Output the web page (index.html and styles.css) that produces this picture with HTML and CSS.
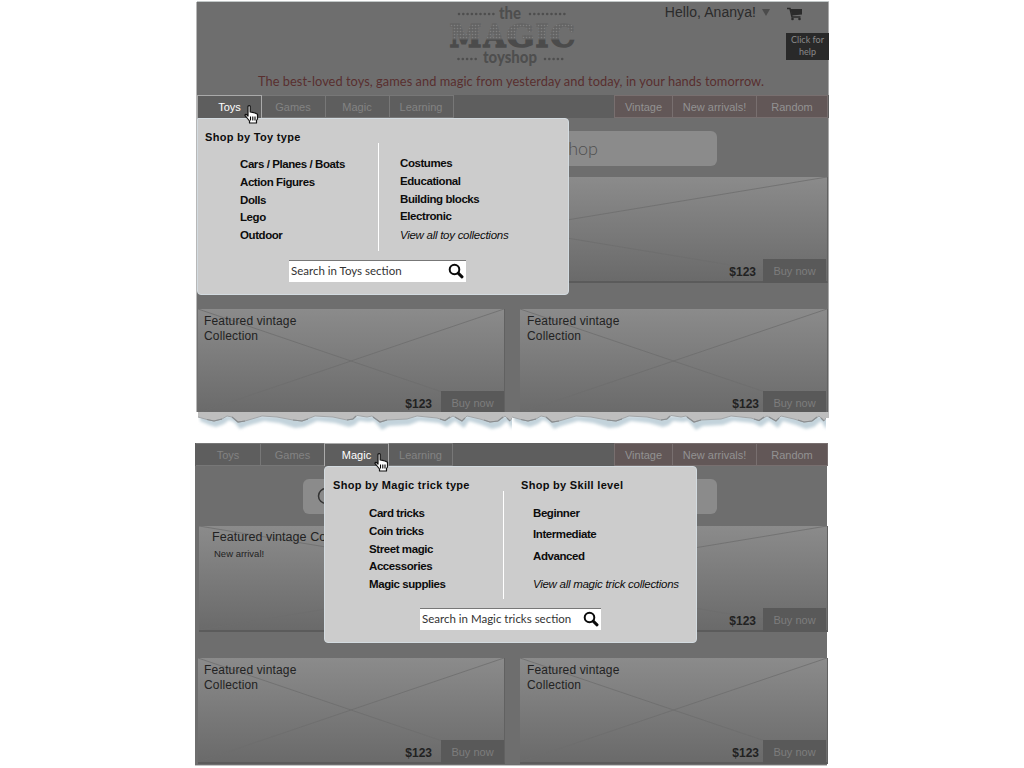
FILE: index.html
```html
<!DOCTYPE html>
<html lang="en">
<head>
<meta charset="utf-8">
<title>The Magic Toyshop</title>
<link rel="stylesheet" href="styles.css">
</head>
<body>
<svg class="defs" width="0" height="0">
  <defs>
    <symbol id="hand" viewBox="0 0 15 19">
      <path d="M4 1.200Q5.200 .2 6.200 1.200V7L8.500 7.300 11 8 13.500 9.200V14L12.500 15.500V18H5.500V16L3.500 13.500 1 10.500Q1 9 2.500 9.500L4 11z" fill="#fff" stroke="#111" stroke-width="1.200" stroke-linejoin="round"/>
      <path d="M6.500 11.500v4M8.800 11.500v4M11 11.500v4" stroke="#000" stroke-width="1.100"/>
    </symbol>
    <symbol id="lens" viewBox="0 0 16 16">
      <circle cx="6.500" cy="6.500" r="4.800" fill="none" stroke="#0a0a0a" stroke-width="2"/>
      <path d="M10.200 10.200L14 13.800" stroke="#0a0a0a" stroke-width="3" stroke-linecap="round"/>
    </symbol>
    <symbol id="tear" viewBox="0 0 314 20">
      <path d="M0 1V6L9 10 16 12 24 9 29 5 34 7 40 14 47 11 64 6 79 8 95 13 104 12 117 6 135 8 149 12 155 10 159 6 169 7 174 6 182 15 189 11 209 10 219 6 239 8 247 12 255 6 264 13 269 6 282 10 292 14 300 12 307 6 312 14 314 8V1z" fill="#c3d3db" filter="url(#soft)" transform="translate(2 3)"/>
      <path d="M0 0V5L9 7.500 16 9 24 7 29 4 34 5 40 10 47 9 64 4 79 5 95 8 104 9 117 4 135 5 149 8 155 7 159 3.500 169 5 174 4 182 10 189 8 209 7 219 4 239 6 247 8.500 255 4 264 9 269 4 282 7 292 10 300 9 307 4 312 9 314 6V0z" fill="#bebebe"/>
      <path d="M0 5L9 7.500 16 9 24 7 29 4 34 5 40 10 47 9 64 4 79 5 95 8 104 9 117 4 135 5 149 8 155 7 159 3.500 169 5 174 4 182 10 189 8 209 7 219 4 239 6 247 8.500 255 4 264 9 269 4 282 7 292 10 300 9 307 4 312 9 314 6" fill="none" stroke="#a2a5a7" stroke-width="1"/>
      <path d="M9 7.500L16 9 24 7M34 5L40 10 47 9M95 8L104 9 110 7M149 8L155 7 158 4M175 5L182 10 189 8M242 7L247 8.500 252 5M257 5L264 9 267 6M286 8L292 10 300 9 305 5M309 6L312 9" fill="none" stroke="#8a8d8f" stroke-width="1.200"/>
    </symbol>
    <filter id="soft" x="-5%" y="-50%" width="110%" height="200%"><feGaussianBlur stdDeviation="1.800"/></filter>
    <pattern id="studs" x="0" y="20" width="3" height="30" patternUnits="userSpaceOnUse">
      <rect width="3" height="30" fill="#646464"/>
      <g fill="#808080"><circle cx="1.500" cy="5.500" r=".8"/><circle cx="1.500" cy="8.500" r=".8"/><circle cx="1.500" cy="11.500" r=".8"/><circle cx="1.500" cy="14.500" r=".8"/><circle cx="1.500" cy="17.500" r=".8"/></g>
      <rect y="19.500" width="3" height="10.500" fill="#4b4b4b"/>
    </pattern>
  </defs>
</svg>

<main class="page">
  <section class="shop shop-toys">
    <header class="masthead">
      <svg class="logo" viewBox="446 2 132 68" width="132" height="68">
        <g stroke="#4e4e4e" stroke-width="2.600" stroke-linecap="round" stroke-dasharray="0 4.300">
          <path d="M459 14h35M530 14h35"/><path d="M458.500 59h18M545 59h18"/>
        </g>
        <g class="logo-small">
          <text x="499" y="19" textLength="22" lengthAdjust="spacingAndGlyphs">the</text>
          <text x="483" y="63" textLength="54" lengthAdjust="spacingAndGlyphs">toyshop</text>
        </g>
        <g class="logo-big">
          <text x="449.500" y="46.500" textLength="32" lengthAdjust="spacingAndGlyphs">M</text>
          <text x="483.500" y="46.500" textLength="22" lengthAdjust="spacingAndGlyphs">A</text>
          <text x="506.500" y="46.500" textLength="28" lengthAdjust="spacingAndGlyphs">G</text>
          <text x="535.500" y="46.500" textLength="13" lengthAdjust="spacingAndGlyphs">I</text>
          <text x="550" y="46.500" textLength="25" lengthAdjust="spacingAndGlyphs">C</text>
        </g>
      </svg>
      <div class="account">
        <div class="account-row">
          <span class="hello">Hello, Ananya!</span>
          <svg class="caret" width="8" height="7"><path d="M0 0h8L4 7z" fill="#4b4b4b"/></svg>
          <svg class="cart" width="16" height="14" viewBox="0 0 16 14"><path d="M0 1.500h3l2 8.500h8.500" fill="none" stroke="#2b2b2b" stroke-width="1.500"/><path d="M3.500 2h11.500v5.500l-10 1z" fill="#2b2b2b"/><circle cx="5.500" cy="12" r="1.300" fill="#2b2b2b"/><circle cx="12.500" cy="12" r="1.300" fill="#2b2b2b"/></svg>
        </div>
        <div class="help">Click for<br>help</div>
      </div>
      <p class="tagline">The best-loved toys, games and magic from yesterday and today, in your hands tomorrow.</p>
    </header>
    <nav class="nav">
      <a class="tab active">Toys</a><a class="tab">Games</a><a class="tab">Magic</a><a class="tab">Learning</a>
      <span class="gap"></span>
      <a class="tab hot vintage">Vintage</a><a class="tab hot arrivals">New arrivals!</a><a class="tab hot random">Random</a>
    </nav>
    <div class="content">
      <div class="search"><svg width="20" height="20"><circle cx="9" cy="9" r="7.500" fill="none" stroke="#333" stroke-width="1.500"/></svg><span>Search the Magic Toy Shop</span></div>
      <article class="card hero">
        <svg class="cross" viewBox="0 0 100 100" preserveAspectRatio="none"><path d="M0 0L100 100M100 0L0 100"/></svg>
        <div class="buy"><b>$123</b><span>Buy now</span></div>
      </article>
      <div class="pair">
        <article class="card">
          <svg class="cross" viewBox="0 0 100 100" preserveAspectRatio="none"><path d="M0 0L100 100M100 0L0 100"/></svg>
          <h3>Featured vintage<br>Collection</h3>
          <div class="buy left"><b>$123</b><span>Buy now</span></div>
        </article>
        <article class="card">
          <svg class="cross" viewBox="0 0 100 100" preserveAspectRatio="none"><path d="M0 0L100 100M100 0L0 100"/></svg>
          <h3>Featured vintage<br>Collection</h3>
          <div class="buy right"><b>$123</b><span>Buy now</span></div>
        </article>
      </div>
    </div>
    <div class="menu menu-toys">
      <h2>Shop by Toy type</h2>
      <div class="columns">
        <ul><li>Cars / Planes / Boats</li><li>Action Figures</li><li>Dolls</li><li>Lego</li><li>Outdoor</li></ul>
        <ul><li>Costumes</li><li>Educational</li><li>Building blocks</li><li>Electronic</li><li class="all">View all toy collections</li></ul>
      </div>
      <div class="find"><span>Search in Toys section</span><svg width="16" height="16"><use href="#lens"/></svg></div>
    </div>
    <svg class="pointer" width="15" height="19"><use href="#hand"/></svg>
  </section>

  <div class="torn"><svg width="314" height="20"><use href="#tear" width="314" height="20"/></svg><svg width="317" height="20"><use href="#tear" width="314" height="20"/><rect x="313" width="4" height="6" fill="#bebebe"/></svg></div>

  <section class="shop shop-magic">
    <nav class="nav">
      <a class="tab">Toys</a><a class="tab">Games</a><a class="tab active">Magic</a><a class="tab">Learning</a>
      <span class="gap"></span>
      <a class="tab hot vintage">Vintage</a><a class="tab hot arrivals">New arrivals!</a><a class="tab hot random">Random</a>
    </nav>
    <div class="content">
      <div class="search"><svg width="20" height="20"><circle cx="9" cy="9" r="7.500" fill="none" stroke="#333" stroke-width="1.500"/></svg></div>
      <article class="card hero">
        <svg class="cross" viewBox="0 0 100 100" preserveAspectRatio="none"><path d="M0 0L100 100M100 0L0 100"/></svg>
        <h3>Featured vintage Collection</h3>
        <p class="note">New arrival!</p>
        <div class="buy"><b>$123</b><span>Buy now</span></div>
      </article>
      <div class="pair">
        <article class="card">
          <svg class="cross" viewBox="0 0 100 100" preserveAspectRatio="none"><path d="M0 0L100 100M100 0L0 100"/></svg>
          <h3>Featured vintage<br>Collection</h3>
          <div class="buy left"><b>$123</b><span>Buy now</span></div>
        </article>
        <article class="card">
          <svg class="cross" viewBox="0 0 100 100" preserveAspectRatio="none"><path d="M0 0L100 100M100 0L0 100"/></svg>
          <h3>Featured vintage<br>Collection</h3>
          <div class="buy right"><b>$123</b><span>Buy now</span></div>
        </article>
      </div>
    </div>
    <div class="menu menu-magic">
      <div class="heads"><h2>Shop by Magic trick type</h2><h2>Shop by Skill level</h2></div>
      <div class="columns">
        <ul><li>Card tricks</li><li>Coin tricks</li><li>Street magic</li><li>Accessories</li><li>Magic supplies</li></ul>
        <ul class="levels"><li>Beginner</li><li>Intermediate</li><li>Advanced</li><li class="all">View all magic trick collections</li></ul>
      </div>
      <div class="find"><span>Search in Magic tricks section</span><svg width="16" height="16"><use href="#lens"/></svg></div>
    </div>
    <svg class="pointer" width="15" height="19"><use href="#hand"/></svg>
  </section>
</main>
</body>
</html>
```
FILE: styles.css
```css
* { box-sizing: border-box; }
body { margin: 0; background: #fff; font-family: "Liberation Sans", Arial, sans-serif; color: #222; font-variant-ligatures: none; }
h2, h3, p, ul { margin: 0; padding: 0; list-style: none; }
.defs { display: block; position: absolute; }
.page { padding-top: 2px; height: 768px; overflow: hidden; }
.shop { position: relative; width: 632px; background: #6e6e6e; }
.shop-toys { margin-left: 197px; height: 410px; box-shadow: -1px 0 #b8b8b8, 0 -1px #c2c8c8, inset -1px 0 #aaa; }
.shop-magic { margin-left: 195px; height: 322px; margin-top: 10px; box-shadow: 0 1px #c4c4c4, inset 0 1px #777; }

/* Masthead */
.masthead { height: 93px; display: grid; grid-template: 68px 25px / 249px 132px 1fr; }
.logo { grid-column: 2; }
.logo-small { font: 900 17px Lato, sans-serif; fill: #4e4e4e; }
.logo-big { font: bold 32px "DejaVu Serif", serif; fill: url(#studs); stroke: url(#studs); stroke-width: 1.600px; }
.account { display: flex; flex-direction: column; align-items: flex-end; }
.account-row { display: flex; height: 31px; padding: 2px 26px 0 0; }
.hello { font-size: 14px; line-height: 16px; color: #2b2b2b; white-space: nowrap; letter-spacing: .07px; }
.caret { margin: 5px 17px 0 6px; }
.cart { margin-top: 3px; }
.help { width: 43px; height: 27px; background: #292929; color: #8a8a8a; text-align: center; font: 9px/12px Lato, sans-serif; padding-top: 1px; }
.tagline { grid-column: 1 / 4; font: 12.800px/18px Lato, sans-serif; letter-spacing: .055px; color: #592f2f; padding: 2px 0 0 61px; white-space: nowrap; }

/* Navigation */
.nav { display: flex; height: 23px; background: #5e5e5e; }
.tab { width: 64px; border: 1px solid #777; border-left-width: 0; color: #838383; font-size: 11px; line-height: 22px; text-align: center; }
.tab.active { color: #fff; border: 1px solid #aaa; border-bottom: 0; }
.gap { flex: 1; }
.hot { background: #625757; color: #929292; border-color: #786f6f; }
.hot.vintage { width: 59px; border-left-width: 1px; }
.arrivals { width: 84px; }
.random { width: 71px; }
.shop-toys .nav { padding-right: 1px; }
.shop-toys .tab.active { width: 65px; margin-right: -.5px; }
.shop-magic .nav { margin-right: -1px; padding-left: 1px; }
.shop-magic .tab:first-child { width: 65px; }
.shop-magic .tab.active { width: 65px; margin-left: -1px; }

/* Catalogue */
.content { padding: 13px 1px 0; }
.search { width: 414px; height: 35px; margin: 0 0 11px 105px; padding: 8px 14px; border-radius: 6px; background: #8b8b8b; display: flex; gap: 30px; font: 300 18px/18px Lato, sans-serif; color: #505050; }
.search span { width: 231px; text-align: right; white-space: nowrap; }
.card { position: relative; display: flex; flex-direction: column; flex-shrink: 0; width: 307px; height: 106px; background: linear-gradient(#8b8b8b, #6a6a6a); border-right: 1px solid #616161; border-bottom: 2px solid #5b5b5b; }
.card.hero { width: 630px; margin-bottom: 26px; }
.cross { position: absolute; inset: 0; width: 100%; height: 100%; }
.cross path { stroke: #6d6d6d; stroke-width: .8; vector-effect: non-scaling-stroke; fill: none; }
.card h3 { position: relative; font-weight: normal; font-size: 12px; line-height: 15px; letter-spacing: .15px; padding: 5px 0 0 6px; color: #222; }
.pair .card:last-child { width: 308px; }
.pair .card:last-child h3 { padding-left: 7px; }
.note { position: relative; font-size: 9.500px; color: #222; }
.hero .note { padding: 3px 0 0 15px; }
.card.hero h3 { padding: 4px 0 0 13px; font-size: 12.500px; letter-spacing: .05px; }
.buy { position: relative; margin: auto 0 -2px; align-self: flex-end; display: flex; gap: 7px; font-size: 12px; line-height: 27px; color: #222; height: 24px; }
.buy span { width: 63px; height: 24px; background: #595959; color: #7d7d7d; font-size: 11px; line-height: 25px; text-align: center; }
.hero .buy { margin-right: 1px; }
.buy.left { gap: 9px; }
.buy.right { gap: 4px; margin-right: 1px; }
.pair { display: flex; gap: 15px; }
.shop-toys .content { height: 294px; overflow: hidden; }
.shop-magic .content { padding: 13px 0 0 3px; }
.shop-magic .search { margin-bottom: 12px; }
.shop-magic .hero { margin-left: 1px; width: 629px; }

/* Drop-down panels */
.menu { position: absolute; width: 372px; height: 177px; background: #ccc; border: 1px solid #d3dbe0; border-radius: 4px; color: #0c0c0c; padding: 11px 8px 0 7px; }
.menu-toys { left: 0; top: 116px; border-radius: 0 4px 4px 4px; }
.menu-magic { left: 129px; top: 23px; width: 373px; }
.menu h2 { font-size: 11px; line-height: 14px; letter-spacing: .3px; white-space: nowrap; }
.heads { display: grid; grid-template-columns: 188px 1fr; padding-left: 1px; }
.columns { display: grid; grid-template-columns: 174px 1fr; height: 108px; margin-top: -1px; }
.columns ul { padding: 13px 0 0 35px; font-size: 11.500px; font-weight: bold; line-height: 17.800px; letter-spacing: -.42px; white-space: nowrap; }
.columns ul:first-child { border-right: 1px solid #fff; }
.columns ul + ul { padding: 12px 0 0 21px; }
.columns .all { font-weight: normal; font-style: italic; letter-spacing: -.27px; padding-top: 1px; }
.menu-magic .columns { grid-template-columns: 172px 1fr; }
.menu-magic .columns ul:first-child { padding: 14px 0 0 37px; }
.menu-magic .columns ul.levels { padding: 12px 0 0 29px; line-height: 21.300px; }
.menu-magic .levels .all { padding-top: 7px; }
.find { display: flex; justify-content: space-between; width: 177px; height: 22px; margin: 9px 0 0 84px; padding: 2px 2px 0; background: #fff; border-top: 1px solid #777; font: 11.500px/15px Lato, sans-serif; color: #333; white-space: nowrap; }
.menu-magic .find { width: 181px; margin-left: 88px; }
.pointer { position: absolute; left: 47px; top: 103px; }
.shop-magic .pointer { left: 179px; top: 10px; }

.torn { display: flex; height: 21px; margin-left: 198px; width: 631px; overflow: hidden; }
```
